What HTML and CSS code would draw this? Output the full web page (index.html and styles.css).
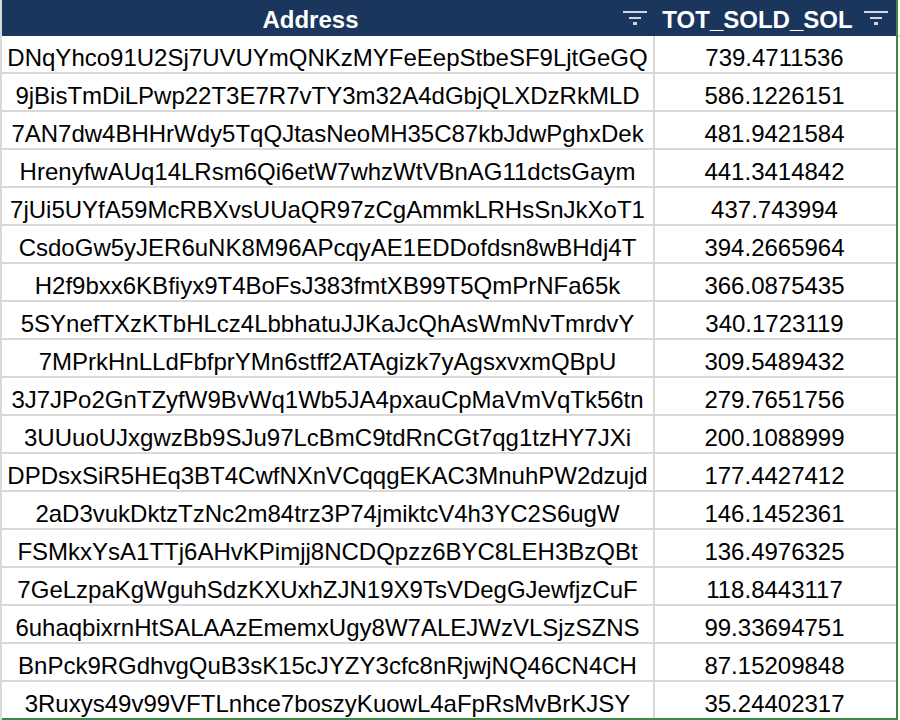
FILE: index.html
```html
<!DOCTYPE html>
<html>
<head>
<meta charset="utf-8">
<link rel="stylesheet" href="styles.css">
</head>
<body>
<div class="sheet">
  <div class="table">
    <div class="row head">
      <div class="cell c1"><span class="htext">Address</span><svg class="filt" width="24" height="16" viewBox="0 0 24 16"><rect x="0" y="0" width="24" height="2"/><rect x="6" y="6" width="12" height="2"/><rect x="10" y="11" width="4" height="3"/></svg></div>
      <div class="cell c2"><span class="htext">TOT_SOLD_SOL</span><svg class="filt" width="24" height="16" viewBox="0 0 24 16"><rect x="0" y="0" width="24" height="2"/><rect x="6" y="6" width="12" height="2"/><rect x="10" y="11" width="4" height="3"/></svg></div>
    </div>
    <div class="row"><div class="cell c1">DNqYhco91U2Sj7UVUYmQNKzMYFeEepStbeSF9LjtGeGQ</div><div class="cell c2">739.4711536</div></div>
    <div class="row"><div class="cell c1">9jBisTmDiLPwp22T3E7R7vTY3m32A4dGbjQLXDzRkMLD</div><div class="cell c2">586.1226151</div></div>
    <div class="row"><div class="cell c1">7AN7dw4BHHrWdy5TqQJtasNeoMH35C87kbJdwPghxDek</div><div class="cell c2">481.9421584</div></div>
    <div class="row"><div class="cell c1">HrenyfwAUq14LRsm6Qi6etW7whzWtVBnAG11dctsGaym</div><div class="cell c2">441.3414842</div></div>
    <div class="row"><div class="cell c1">7jUi5UYfA59McRBXvsUUaQR97zCgAmmkLRHsSnJkXoT1</div><div class="cell c2">437.743994</div></div>
    <div class="row"><div class="cell c1">CsdoGw5yJER6uNK8M96APcqyAE1EDDofdsn8wBHdj4T</div><div class="cell c2">394.2665964</div></div>
    <div class="row"><div class="cell c1">H2f9bxx6KBfiyx9T4BoFsJ383fmtXB99T5QmPrNFa65k</div><div class="cell c2">366.0875435</div></div>
    <div class="row"><div class="cell c1">5SYnefTXzKTbHLcz4LbbhatuJJKaJcQhAsWmNvTmrdvY</div><div class="cell c2">340.1723119</div></div>
    <div class="row"><div class="cell c1">7MPrkHnLLdFbfprYMn6stff2ATAgizk7yAgsxvxmQBpU</div><div class="cell c2">309.5489432</div></div>
    <div class="row"><div class="cell c1">3J7JPo2GnTZyfW9BvWq1Wb5JA4pxauCpMaVmVqTk56tn</div><div class="cell c2">279.7651756</div></div>
    <div class="row"><div class="cell c1">3UUuoUJxgwzBb9SJu97LcBmC9tdRnCGt7qg1tzHY7JXi</div><div class="cell c2">200.1088999</div></div>
    <div class="row"><div class="cell c1">DPDsxSiR5HEq3BT4CwfNXnVCqqgEKAC3MnuhPW2dzujd</div><div class="cell c2">177.4427412</div></div>
    <div class="row"><div class="cell c1">2aD3vukDktzTzNc2m84trz3P74jmiktcV4h3YC2S6ugW</div><div class="cell c2">146.1452361</div></div>
    <div class="row"><div class="cell c1">FSMkxYsA1TTj6AHvKPimjj8NCDQpzz6BYC8LEH3BzQBt</div><div class="cell c2">136.4976325</div></div>
    <div class="row"><div class="cell c1">7GeLzpaKgWguhSdzKXUxhZJN19X9TsVDegGJewfjzCuF</div><div class="cell c2">118.8443117</div></div>
    <div class="row"><div class="cell c1">6uhaqbixrnHtSALAAzEmemxUgy8W7ALEJWzVLSjzSZNS</div><div class="cell c2">99.33694751</div></div>
    <div class="row"><div class="cell c1">BnPck9RGdhvgQuB3sK15cJYZY3cfc8nRjwjNQ46CN4CH</div><div class="cell c2">87.15209848</div></div>
    <div class="row last"><div class="cell c1">3Ruxys49v99VFTLnhce7boszyKuowL4aFpRsMvBrKJSY</div><div class="cell c2">35.24402317</div></div>
  </div>
  <div class="rest">
    <div class="rest-head"></div>
  </div>
</div>
</body>
</html>
```
FILE: styles.css
```css
html, body {
  margin: 0;
  padding: 0;
  background: #ffffff;
}
body {
  width: 900px;
  height: 720px;
  overflow: hidden;
  font-family: "Liberation Sans", Arial, Helvetica, sans-serif;
  color: #000000;
}
.sheet {
  display: flex;
  width: 900px;
  height: 720px;
}
.table {
  display: flex;
  flex-direction: column;
  width: 894px;
  border-left: 2px solid #d9d9d9;
  border-right: 2px solid #3c8a46;
  flex: none;
}
.row {
  display: flex;
  height: 36px;
  border-bottom: 2px solid #d9d9d9;
  flex: none;
}
.row.last {
  border-bottom-color: #3c8a46;
}
.row.head {
  height: 36px;
  border-bottom: none;
  background: #1b365d;
}
.cell {
  display: flex;
  justify-content: center;
  align-items: flex-end;
  font-size: 24px;
  line-height: 28px;
  white-space: nowrap;
  box-sizing: border-box;
}
.c1 {
  width: 653px;
  border-right: 2px solid #d9d9d9;
  flex: none;
}
.c2 {
  width: 239px;
  flex: none;
}
.head .cell {
  color: #ffffff;
  font-weight: bold;
  border-right-color: #1b365d;
  position: relative;
  padding-right: 34px;
  padding-bottom: 2px;
  align-items: flex-end;
  line-height: 28px;
}
.filt {
  position: absolute;
  right: 6px;
  top: 11px;
  fill: #d3d8e0;
}
.rest {
  flex: 1;
}
.rest-head {
  height: 35px;
  border-bottom: 2px solid #d9d9d9;
}
```
